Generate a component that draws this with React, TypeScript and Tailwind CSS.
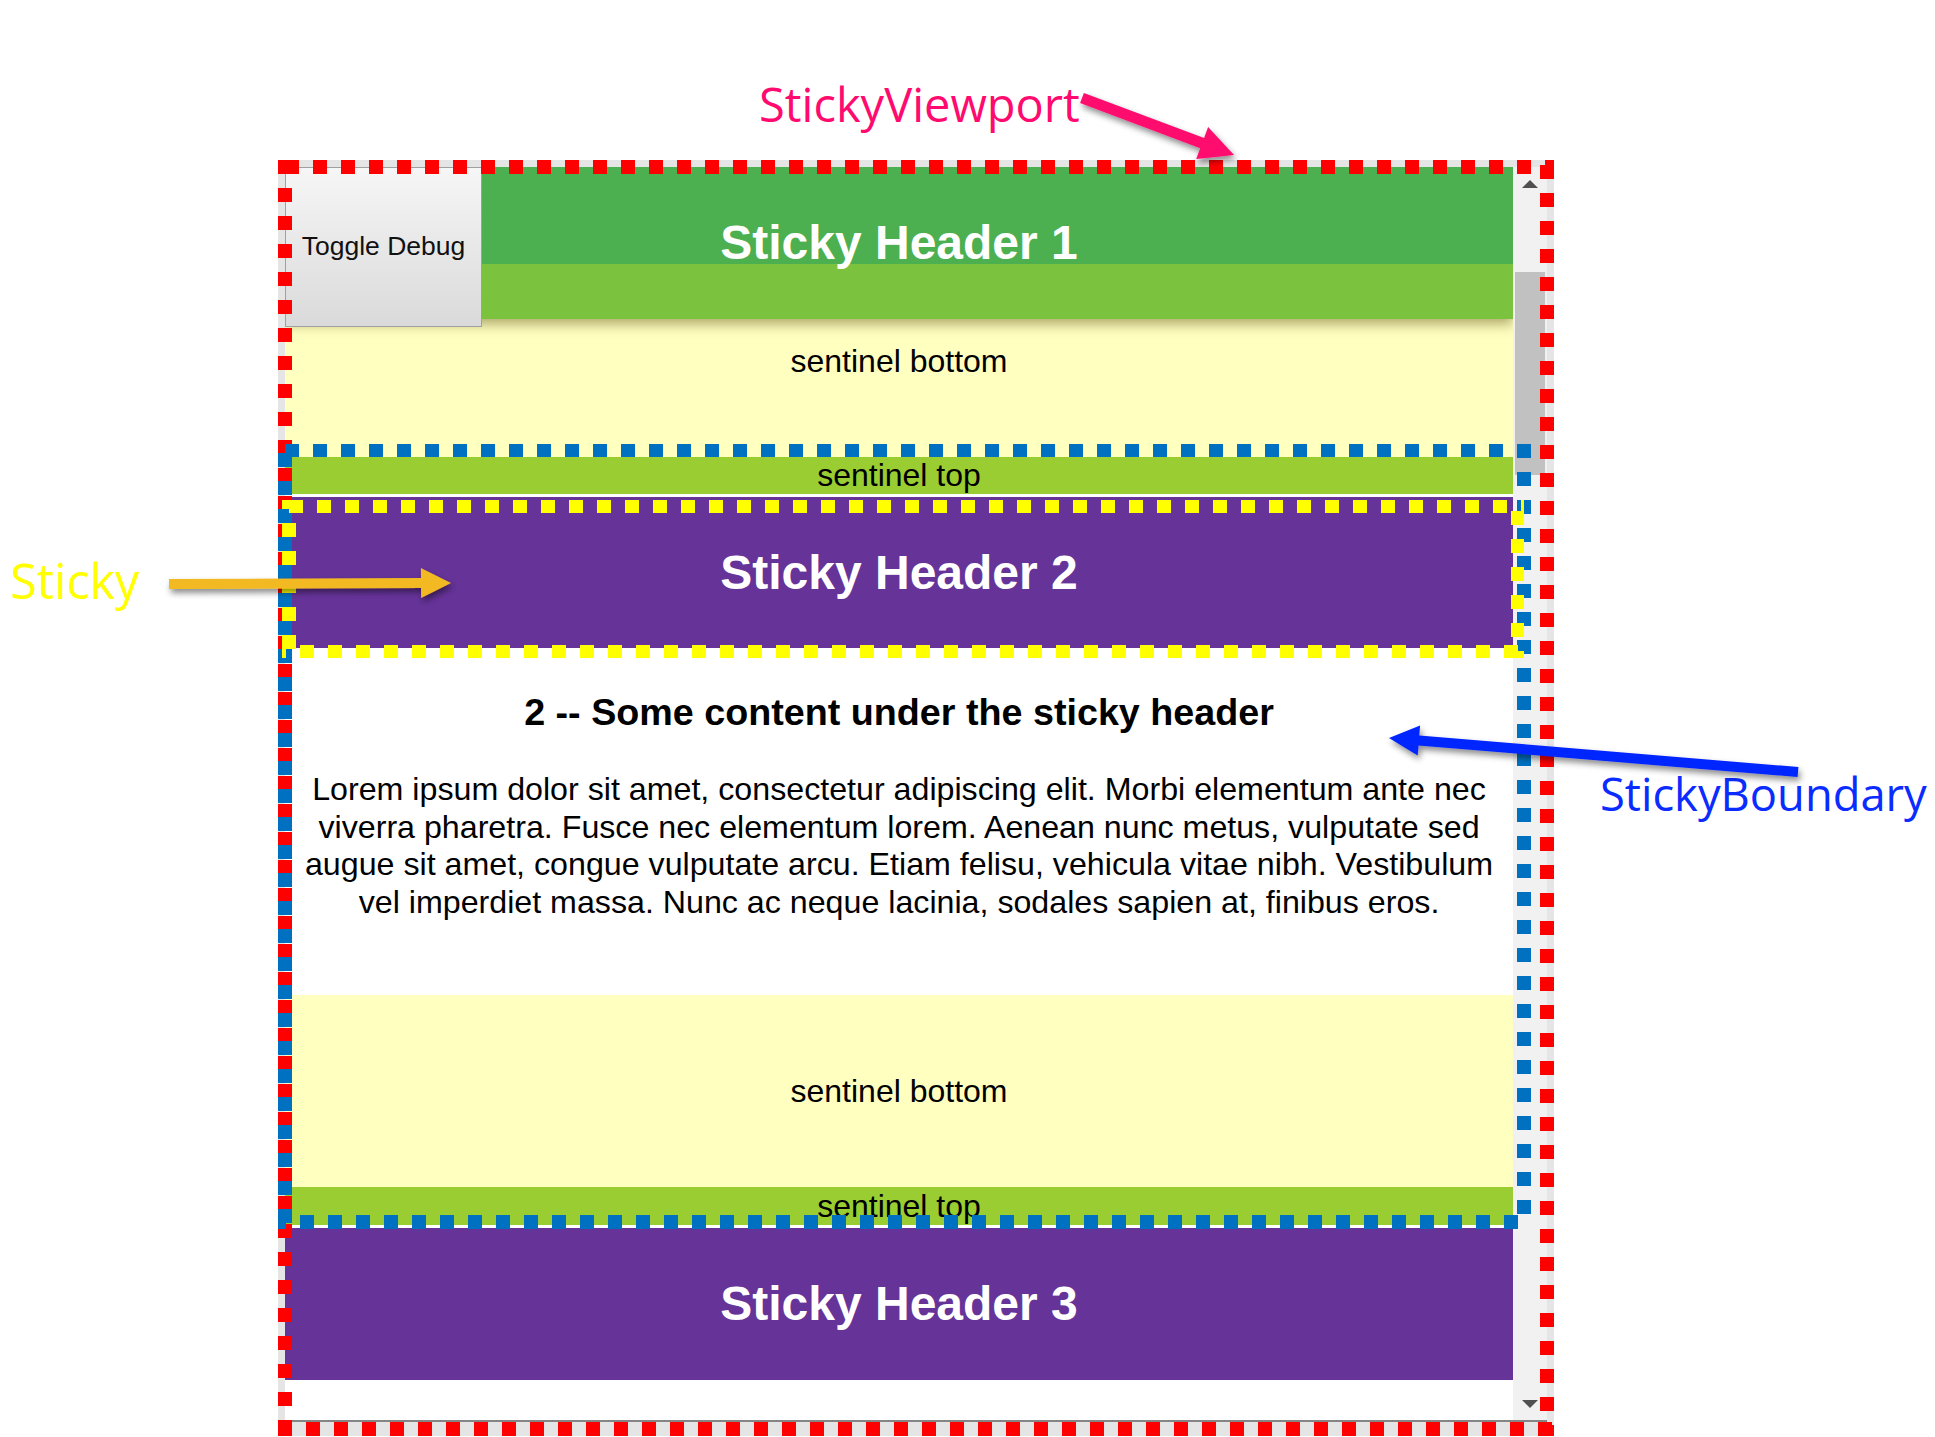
import React from "react";

// dashed debug outlines, drawn as strips (14px squares, 28px period)
const RED_H0 = "[background:repeating-linear-gradient(90deg,#ff0000_0_14px,transparent_14px_28px)]";
const RED_H7 = "[background:repeating-linear-gradient(90deg,transparent_0_7px,#ff0000_7px_21px,transparent_21px_28px)]";
const RED_V0 = "[background:repeating-linear-gradient(180deg,#ff0000_0_14px,transparent_14px_28px)]";
const RED_V5 = "[background:repeating-linear-gradient(180deg,transparent_0_5px,#ff0000_5px_19px,transparent_19px_28px)]";

const BLUE_H7 = "[background:repeating-linear-gradient(90deg,transparent_0_7px,#0070c0_7px_21px,transparent_21px_28px)]";
const BLUE_H22 = "[background:repeating-linear-gradient(90deg,#0070c0_0_8px,transparent_8px_22px,#0070c0_22px_28px)]";
const BLUE_V9 = "[background:repeating-linear-gradient(180deg,transparent_0_9px,#0070c0_9px_23px,transparent_23px_28px)]";
const BLUE_V0 = "[background:repeating-linear-gradient(180deg,#0070c0_0_14px,transparent_14px_28px)]";

const YEL_H7 = "[background:repeating-linear-gradient(90deg,transparent_0_7px,#ffff00_7px_21px,transparent_21px_28px)]";
const YEL_H18 = "[background:repeating-linear-gradient(90deg,#ffff00_0_4px,transparent_4px_18px,#ffff00_18px_28px)]";
const YEL_V23 = "[background:repeating-linear-gradient(180deg,#ffff00_0_9px,transparent_9px_23px,#ffff00_23px_28px)]";
const YEL_V11 = "[background:repeating-linear-gradient(180deg,transparent_0_11px,#ffff00_11px_25px,transparent_25px_28px)]";

function arrowPoints(x1: number, y1: number, x2: number, y2: number, sw: number, hl: number, hw: number) {
	const dx = x2 - x1;
	const dy = y2 - y1;
	const len = Math.hypot(dx, dy);
	const ux = dx / len;
	const uy = dy / len;
	const px = -uy;
	const py = ux;
	const bx = x2 - ux * hl;
	const by = y2 - uy * hl;
	const pts = [
		[x1 + (px * sw) / 2, y1 + (py * sw) / 2],
		[bx + (px * sw) / 2, by + (py * sw) / 2],
		[bx + (px * hw) / 2, by + (py * hw) / 2],
		[x2, y2],
		[bx - (px * hw) / 2, by - (py * hw) / 2],
		[bx - (px * sw) / 2, by - (py * sw) / 2],
		[x1 - (px * sw) / 2, y1 - (py * sw) / 2],
	];
	return pts.map((p) => p.map((n) => n.toFixed(1)).join(",")).join(" ");
}

const Scrollbar = () => (
	<div className="w-[34px] h-full bg-[#f1f1f1] flex flex-col items-center pt-[13px] pb-[12px]">
		<svg width="16" height="8" viewBox="0 0 16 8">
			<polygon points="0,8 16,8 8,0" fill="#505050" />
		</svg>
		<div className="mt-[84px] w-[30px] h-[203px] bg-[#c1c1c1]" />
		<div className="flex-1" />
		<svg width="16" height="8" viewBox="0 0 16 8">
			<polygon points="0,0 16,0 8,8" fill="#505050" />
		</svg>
	</div>
);

const Content = () => (
	<div className="relative isolate w-[1228px] h-full overflow-hidden bg-white flex flex-col text-black">
		<div className="relative shrink-0 h-[152px] flex items-center justify-center [background:linear-gradient(#4caf50_0_97px,#7bc23e_97px_100%)] shadow-[0_5px_12px_rgba(70,60,0,0.45)]">
			<span className="text-white font-bold text-[48px]">Sticky Header 1</span>
		</div>
		<div className="shrink-0 h-[138px] bg-[#ffffc0] pt-[18px] text-center text-[32px]">
			sentinel bottom
		</div>
		<div className="shrink-0 h-[37px] bg-[#9acd32] flex items-center justify-center text-[32px] leading-[37px]">
			sentinel top
		</div>
		<div className="shrink-0 h-[3px]" />
		<div className="shrink-0 h-[151px] bg-[#663399] flex items-center justify-center">
			<span className="text-white font-bold text-[48px]">Sticky Header 2</span>
		</div>
		<div className="shrink-0 h-[347px] text-center px-[8px] pt-[43px]">
			<h3 className="font-bold text-[37.7px] leading-[43px]">
				2 -- Some content under the sticky header
			</h3>
			<p className="mt-[37px] text-[32.2px] leading-[37.7px]">
				Lorem ipsum dolor sit amet, consectetur adipiscing elit. Morbi elementum ante nec
				<br />
				viverra pharetra. Fusce nec elementum lorem. Aenean nunc metus, vulputate sed
				<br />
				augue sit amet, congue vulputate arcu. Etiam felisu, vehicula vitae nibh. Vestibulum
				<br />
				vel imperdiet massa. Nunc ac neque lacinia, sodales sapien at, finibus eros.
			</p>
		</div>
		<div className="shrink-0 h-[192px] bg-[#ffffc0] flex items-center justify-center text-[32px]">
			sentinel bottom
		</div>
		<div className="shrink-0 h-[38px] bg-[#9acd32] flex items-center justify-center text-[32px] leading-[38px]">
			sentinel top
		</div>
		<div className="shrink-0 h-[3px]" />
		<div className="shrink-0 h-[152px] bg-[#663399] flex items-center justify-center">
			<span className="text-white font-bold text-[48px]">Sticky Header 3</span>
		</div>
		<div className="flex-1" />

		<button className="absolute left-0 top-0 w-[197px] h-[160px] border border-[#a0a0a0] [background:linear-gradient(#f6f6f6,#dadada)] text-[26.5px] text-[#111]">
			Toggle Debug
		</button>
	</div>
);

const Viewport = () => (
	<div className="relative w-[1276px] h-[1276px] bg-[#e5e5e5] px-[7px] pt-[7px] flex flex-col">
		<div className="flex h-[1253px]">
			<Content />
			<Scrollbar />
		</div>
		<div className="h-[2px] bg-[#858585]" />

		{/* StickyViewport outline */}
		<div className={`absolute left-0 top-0 w-[1276px] h-[14px] ${RED_H7}`} />
		<div className={`absolute left-0 top-[1262px] w-[1276px] h-[14px] ${RED_H0}`} />
		<div className={`absolute left-0 top-0 w-[14px] h-[1276px] ${RED_V0}`} />
		<div className={`absolute left-[1262px] top-0 w-[14px] h-[1276px] ${RED_V5}`} />

		{/* StickyBoundary outline */}
		<div className={`absolute left-0 top-[284px] w-[1253px] h-[13px] ${BLUE_H7}`} />
		<div className={`absolute left-0 top-[1055px] w-[1240px] h-[14px] ${BLUE_H22}`} />
		<div className={`absolute left-0 top-[284px] w-[14px] h-[785px] ${BLUE_V9}`} />
		<div className={`absolute left-[1239px] top-[284px] w-[14px] h-[770px] ${BLUE_V0}`} />

		{/* Sticky outline */}
		<div className={`absolute left-[4px] top-[340px] w-[1242px] h-[13px] ${YEL_H7}`} />
		<div className={`absolute left-[4px] top-[485px] w-[1242px] h-[13px] ${YEL_H18}`} />
		<div className={`absolute left-[4px] top-[340px] w-[14px] h-[158px] ${YEL_V23}`} />
		<div className={`absolute left-[1233px] top-[340px] w-[13px] h-[158px] ${YEL_V11}`} />
	</div>
);

const Annotations = () => (
	<>
		<span className="absolute left-[759px] top-[81px] font-['Open_Sans',sans-serif] text-[47px] leading-none text-[#ff0a6e]">
			StickyViewport
		</span>
		<span className="absolute left-[10px] top-[556px] font-['Open_Sans',sans-serif] text-[48.5px] leading-none text-[#ffff00]">
			Sticky
		</span>
		<span className="absolute left-[1600px] top-[771px] font-['Open_Sans',sans-serif] text-[45.3px] leading-none text-[#0a2cff]">
			StickyBoundary
		</span>
		<svg
			className="absolute left-0 top-0 pointer-events-none"
			width="1935"
			height="1437"
			viewBox="0 0 1935 1437"
		>
			<defs>
				<filter id="sh" x="-20%" y="-50%" width="140%" height="200%">
					<feDropShadow dx="2" dy="4" stdDeviation="3" floodColor="#000" floodOpacity="0.45" />
				</filter>
			</defs>
			<polygon filter="url(#sh)" fill="#ff0a6e" points={arrowPoints(1082, 98, 1234, 155, 11, 34, 34)} />
			<polygon filter="url(#sh)" fill="#0025ff" points={arrowPoints(1798, 772, 1389, 738, 10, 30, 30)} />
			<polygon filter="url(#sh)" fill="#f2b921" points={arrowPoints(169, 584, 451, 583, 10, 30, 30)} />
		</svg>
	</>
);

export default function App() {
	return (
		<div className="relative w-[1935px] h-[1437px] overflow-hidden bg-white pl-[278px] pt-[160px] font-['Liberation_Sans',Arial,sans-serif]">
			<Viewport />
			<Annotations />
		</div>
	);
}
